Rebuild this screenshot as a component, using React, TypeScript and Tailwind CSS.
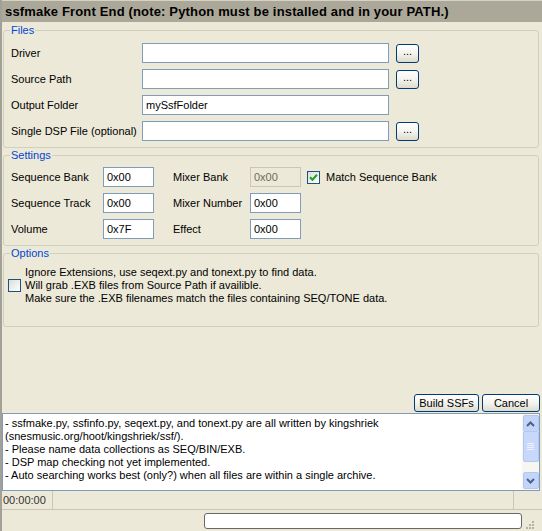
import React, { useState } from 'react';

const font = { fontFamily: '"Liberation Sans", Arial, sans-serif' };

const XpButton: React.FC<{ label: string; className?: string }> = ({ label, className }) => (
  <button
    className={`flex items-center justify-center rounded-[3px] border border-[#003c74] bg-gradient-to-b from-white via-[#f4f3ee] to-[#dedbcd] text-[11px] text-black leading-none ${className ?? ''}`}
  >
    {label}
  </button>
);

const TextBox: React.FC<{ value?: string; className?: string; disabled?: boolean }> = ({ value, className, disabled }) => (
  <div
    className={`h-[20px] border flex items-center pl-[3px] text-[11px] ${
      disabled ? 'bg-[#ece9d8] border-[#c9c7ba] text-[#6d6b5e]' : 'bg-white border-[#7f9db9] text-black'
    } ${className ?? ''}`}
  >
    {value}
  </div>
);

const CheckBox: React.FC<{ checked?: boolean }> = ({ checked }) => (
  <div className="w-[13px] h-[13px] shrink-0 border border-[#1c5180] bg-gradient-to-br from-[#dcdcd7] to-white flex items-center justify-center">
    {checked && (
      <svg width="9" height="9" viewBox="0 0 9 9">
        <path d="M1 4.2 L3.5 6.7 L8 1.8" fill="none" stroke="#21a121" strokeWidth="2" />
      </svg>
    )}
  </div>
);

const Legend: React.FC<{ text: string; className?: string }> = ({ text, className }) => (
  <legend className={`px-[1px] -ml-[1px] text-[11px] leading-[13px] text-[#0046d5] ${className ?? ''}`}>{text}</legend>
);

const FileRow: React.FC<{ label: string; value?: string; browse?: boolean }> = ({ label, value, browse }) => (
  <div className="flex items-center h-[20px]">
    <span className="w-[131px] text-[11px]">{label}</span>
    <TextBox value={value} className="w-[247px]" />
    {browse && <XpButton label="..." className="ml-[7px] w-[23px] h-[19px] pb-[3px] text-[#555]" />}
  </div>
);

const SettingsRow: React.FC<{ a: string; av: string; b: string; bv: string; bDisabled?: boolean; extra?: React.ReactNode }> = ({
  a,
  av,
  b,
  bv,
  bDisabled,
  extra,
}) => (
  <div className="flex items-center h-[20px] text-[11px]">
    <span className="w-[92px]">{a}</span>
    <TextBox value={av} className="w-[51px]" />
    <span className="ml-[19px] w-[77px]">{b}</span>
    <TextBox value={bv} className="w-[51px]" disabled={bDisabled} />
    {extra}
  </div>
);

const App: React.FC = () => {
  const [log] = useState([
    '- ssfmake.py, ssfinfo.py, seqext.py, and tonext.py are all written by kingshriek',
    '(snesmusic.org/hoot/kingshriek/ssf/).',
    '- Please name data collections as SEQ/BIN/EXB.',
    '- DSP map checking not yet implemented.',
    '- Auto searching works best (only?) when all files are within a single archive.',
  ]);

  return (
    <div style={font} className="w-[542px] h-[531px] bg-[#ece9d8] border-l-[2px] border-[#a3a197] flex flex-col text-black overflow-hidden">
      {/* Title */}
      <div className="h-[22px] shrink-0 bg-[#aca899] border-t border-[#d6d3c6] flex items-center pl-[3px] text-[13px] font-bold tracking-[0.16px]">
        ssfmake Front End (note: Python must be installed and in your PATH.)
      </div>

      {/* Files */}
      <fieldset className="mt-[2px] ml-[1px] w-[536px] h-[124px] shrink-0 border border-[#d0d0bf] rounded-[3px] px-[7px]">
        <Legend text="Files" />
        <div className="pt-[6px] flex flex-col gap-[6px]">
          <FileRow label="Driver" browse />
          <FileRow label="Source Path" browse />
          <FileRow label="Output Folder" value="mySsfFolder" />
          <FileRow label="Single DSP File (optional)" browse />
        </div>
      </fieldset>

      {/* Settings */}
      <fieldset className="mt-[1px] ml-[1px] w-[536px] h-[97px] shrink-0 border border-[#d0d0bf] rounded-[3px] px-[7px]">
        <Legend text="Settings" />
        <div className="pt-[5px] flex flex-col gap-[6px]">
          <SettingsRow
            a="Sequence Bank"
            av="0x00"
            b="Mixer Bank"
            bv="0x00"
            bDisabled
            extra={
              <div className="ml-[6px] flex items-center gap-[6px]">
                <CheckBox checked />
                <span>Match Sequence Bank</span>
              </div>
            }
          />
          <SettingsRow a="Sequence Track" av="0x00" b="Mixer Number" bv="0x00" />
          <SettingsRow a="Volume" av="0x7F" b="Effect" bv="0x00" />
        </div>
      </fieldset>

      {/* Options */}
      <fieldset className="mt-[1px] ml-[1px] w-[536px] h-[80px] shrink-0 border border-[#d0d0bf] rounded-[3px] pl-[4px]">
        <Legend text="Options" className="ml-[2px]" />
        <div className="pt-[6px] flex items-center gap-[4px] text-[11px] leading-[13px]">
          <CheckBox />
          <div>
            <div>Ignore Extensions, use seqext.py and tonext.py to find data.</div>
            <div>Will grab .EXB files from Source Path if availible.</div>
            <div>Make sure the .EXB filenames match the files containing SEQ/TONE data.</div>
          </div>
        </div>
      </fieldset>

      <div className="flex-1" />

      {/* Buttons */}
      <div className="flex justify-end gap-[3px] pr-[2px] pb-[1px]">
        <XpButton label="Build SSFs" className="w-[65px] h-[18px]" />
        <XpButton label="Cancel" className="w-[58px] h-[18px]" />
      </div>

      {/* Log */}
      <div className="h-[78px] shrink-0 mr-[2px] border border-[#7f9db9] bg-white flex">
        <div className="flex-1 pl-[2px] pt-[3px] text-[11px] leading-[13px]">
          {log.map((l, i) => (
            <div key={i} className="whitespace-nowrap">
              {l}
            </div>
          ))}
        </div>
        <div className="w-[17px] bg-[#f7f6f1] flex flex-col items-center justify-between py-[1px]">
          <div className="w-[16px] h-[17px] rounded-[2px] border border-[#b4c7f0] bg-[#c4d5fc] flex items-center justify-center">
            <svg width="9" height="6" viewBox="0 0 9 6">
              <path d="M1 5 L4.5 1.5 L8 5" fill="none" stroke="#4d6185" strokeWidth="2" />
            </svg>
          </div>
          <div className="w-[16px] h-[31px] -mt-[1px] rounded-[2px] border border-[#b4c7f0] bg-[#c8d8fc] flex flex-col items-center justify-center gap-[1px]">
            <div className="w-[7px] h-[1px] bg-[#eef3fe]" />
            <div className="w-[7px] h-[1px] bg-[#eef3fe]" />
            <div className="w-[7px] h-[1px] bg-[#eef3fe]" />
            <div className="w-[7px] h-[1px] bg-[#eef3fe]" />
          </div>
          <div className="flex-1" />
          <div className="w-[16px] h-[17px] rounded-[2px] border border-[#b4c7f0] bg-[#c4d5fc] flex items-center justify-center">
            <svg width="9" height="6" viewBox="0 0 9 6">
              <path d="M1 1 L4.5 4.5 L8 1" fill="none" stroke="#4d6185" strokeWidth="2" />
            </svg>
          </div>
        </div>
      </div>

      {/* Status */}
      <div className="h-[19px] shrink-0 flex border-b border-[#c9c6b8] text-[11px]">
        <div className="w-[51px] border-r border-[#c9c6b8] flex items-center pl-[1px] text-[#333]">00:00:00</div>
        <div className="flex-1 border-r border-[#c9c6b8]" />
        <div className="w-[28px]" />
      </div>
      <div className="h-[21px] shrink-0 flex items-center">
        <div className="ml-[202px] w-[318px] h-[16px] rounded-[3px] border border-[#686868] bg-white" />
        <div className="ml-[4px] mt-[8px] grid grid-cols-3 gap-[1px]">
          <span />
          <span />
          <span className="w-[2px] h-[2px] bg-[#b7b3a3]" />
          <span />
          <span className="w-[2px] h-[2px] bg-[#b7b3a3]" />
          <span className="w-[2px] h-[2px] bg-[#b7b3a3]" />
          <span className="w-[2px] h-[2px] bg-[#b7b3a3]" />
          <span className="w-[2px] h-[2px] bg-[#b7b3a3]" />
          <span className="w-[2px] h-[2px] bg-[#b7b3a3]" />
        </div>
      </div>
    </div>
  );
};

export default App;
